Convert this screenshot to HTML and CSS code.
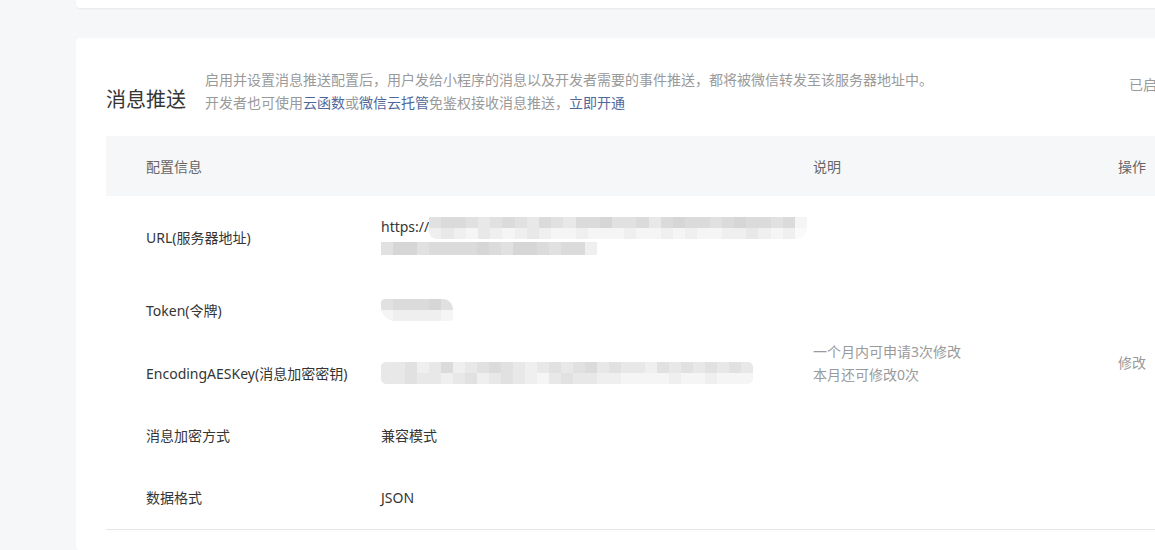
FILE: index.html
```html
<!DOCTYPE html>
<html lang="zh-CN">
<head>
<meta charset="utf-8">
<title>消息推送</title>
<link rel="stylesheet" href="styles.css">
</head>
<body>
<div class="page">
  <div class="card card-prev"></div>
  <section class="card card-push">
    <div class="push-head">
      <h2 class="push-title">消息推送</h2>
      <div class="push-desc">
        <p>启用并设置消息推送配置后，用户发给小程序的消息以及开发者需要的事件推送，都将被微信转发至该服务器地址中。</p>
        <p>开发者也可使用<a href="#">云函数</a>或<a href="#">微信云托管</a>免鉴权接收消息推送，<a href="#">立即开通</a></p>
      </div>
      <div class="push-status">已启用</div>
    </div>
    <table class="cfg">
      <colgroup>
        <col class="c1"><col class="c2"><col class="c3"><col class="c4">
      </colgroup>
      <thead>
        <tr><th>配置信息</th><th></th><th>说明</th><th>操作</th></tr>
      </thead>
      <tbody>
        <tr class="r-url">
          <td class="lbl">URL(服务器地址)</td>
          <td class="val">
            <div class="url-line"><span>https://</span>
              <div class="mz mz-url1">
                <i class="g3"></i><i class="g2"></i><i class="g2"></i><i class="g3"></i><i class="g4"></i><i class="g3"></i><i class="g2"></i><i class="g3"></i><i class="g4"></i><i class="g2"></i><i class="g3"></i><i class="g4"></i><i class="g2"></i><i class="g2"></i><i class="g1"></i><i class="g3"></i><i class="g3"></i><i class="g2"></i><i class="g4"></i><i class="g2"></i><i class="g1"></i><i class="g2"></i><i class="g2"></i><i class="g3"></i><i class="g2"></i><i class="g1"></i><i class="g2"></i><i class="g2"></i><i class="g3"></i><i class="g2"></i><i class="g6"></i>
                <i class="g5"></i><i class="g4"></i><i class="g5"></i><i class="g6"></i><i class="g4"></i><i class="g5"></i><i class="g6"></i><i class="g5"></i><i class="g4"></i><i class="g5"></i><i class="g6"></i><i class="g6"></i><i class="g5"></i><i class="g6"></i><i class="g6"></i><i class="g6"></i><i class="g5"></i><i class="g6"></i><i class="g6"></i><i class="g5"></i><i class="g6"></i><i class="g5"></i><i class="g6"></i><i class="g6"></i><i class="g5"></i><i class="g5"></i><i class="g4"></i><i class="g5"></i><i class="g6"></i><i class="g5"></i><i class="g7"></i>
              </div>
            </div>
            <div class="url-line">
              <div class="mz mz-url2">
                <i class="g3"></i><i class="g1"></i><i class="g1"></i><i class="g3"></i><i class="g2"></i><i class="g2"></i><i class="g2"></i><i class="g2"></i><i class="g1"></i><i class="g2"></i><i class="g3"></i><i class="g1"></i><i class="g1"></i><i class="g2"></i><i class="g3"></i><i class="g2"></i><i class="g2"></i><i class="g5"></i>
              </div>
            </div>
          </td>
          <td class="note" rowspan="5">一个月内可申请3次修改<br>本月还可修改0次</td>
          <td class="op" rowspan="5">修改</td>
        </tr>
        <tr class="r-token">
          <td class="lbl">Token(令牌)</td>
          <td class="val">
            <div class="mz mz-token">
              <i class="g3"></i><i class="g2"></i><i class="g2"></i><i class="g2"></i><i class="g1"></i><i class="g3"></i>
              <i class="g6"></i><i class="g5"></i><i class="g5"></i><i class="g5"></i><i class="g5"></i><i class="g6"></i>
            </div>
          </td>
        </tr>
        <tr class="r-mid">
          <td class="lbl">EncodingAESKey(消息加密密钥)</td>
          <td class="val">
            <div class="mz mz-aes">
              <i class="g4"></i><i class="g4"></i><i class="g3"></i><i class="g5"></i><i class="g4"></i><i class="g2"></i><i class="g5"></i><i class="g4"></i><i class="g3"></i><i class="g2"></i><i class="g3"></i><i class="g4"></i><i class="g5"></i><i class="g4"></i><i class="g3"></i><i class="g4"></i><i class="g3"></i><i class="g2"></i><i class="g4"></i><i class="g3"></i><i class="g4"></i><i class="g4"></i><i class="g5"></i><i class="g3"></i><i class="g4"></i><i class="g3"></i><i class="g4"></i><i class="g3"></i><i class="g4"></i><i class="g3"></i><i class="g4"></i>
              <i class="g4"></i><i class="g4"></i><i class="g3"></i><i class="g4"></i><i class="g4"></i><i class="g5"></i><i class="g4"></i><i class="g3"></i><i class="g5"></i><i class="g4"></i><i class="g3"></i><i class="g4"></i><i class="g5"></i><i class="g6"></i><i class="g4"></i><i class="g3"></i><i class="g4"></i><i class="g4"></i><i class="g5"></i><i class="g5"></i><i class="g6"></i><i class="g6"></i><i class="g6"></i><i class="g6"></i><i class="g5"></i><i class="g6"></i><i class="g6"></i><i class="g5"></i><i class="g6"></i><i class="g6"></i><i class="g6"></i>
            </div>
          </td>
        </tr>
        <tr class="r-mid">
          <td class="lbl">消息加密方式</td>
          <td class="val">兼容模式</td>
        </tr>
        <tr class="r-last">
          <td class="lbl">数据格式</td>
          <td class="val">JSON</td>
        </tr>
      </tbody>
    </table>
  </section>
</div>
</body>
</html>
```

FILE: styles.css
```css
html, body {
  margin: 0;
  padding: 0;
  overflow: hidden;
}
body {
  background: #f6f7f9;
  font-family: "Noto Sans", "Noto Sans CJK SC", sans-serif;
  color: #353535;
  font-size: 14px;
}
.page {
  padding-left: 76px;
  display: flex;
  flex-direction: column;
  gap: 30px;
}
.card {
  background: #fff;
  border-radius: 4px;
  width: 1125px;
}
.card-prev {
  height: 8px;
  border-radius: 0 0 4px 4px;
  box-shadow: 0 1px 2px rgba(0, 0, 0, 0.06);
}
.card-push {
  padding: 30px 30px 20px;
  box-sizing: border-box;
}
.push-head {
  display: flex;
  align-items: flex-end;
}
.push-title {
  margin: 0;
  font-size: 20px;
  font-weight: normal;
  line-height: 28px;
  color: #353535;
  width: 99px;
  flex-shrink: 0;
}
.push-desc {
  font-size: 14px;
  line-height: 23px;
  color: #9a9a9a;
}
.push-desc p {
  margin: 0;
}
.push-desc a {
  color: #4f679a;
  text-decoration: none;
}
.push-status {
  margin-left: auto;
  align-self: flex-start;
  font-size: 14px;
  color: #9a9a9a;
  line-height: 20px;
  margin-top: 7px;
  white-space: nowrap;
}
.cfg {
  margin-top: 22px;
  width: 100%;
  border-collapse: collapse;
  table-layout: fixed;
}
.c1 { width: 275px; }
.c2 { width: 432px; }
.c3 { width: 305px; }
.c4 { width: auto; }
.cfg thead th {
  background: #f6f7f9;
  height: 60px;
  padding: 0;
  text-align: left;
  font-weight: normal;
  font-size: 14px;
  color: #666;
}
.cfg thead th:first-child {
  padding-left: 40px;
}
.cfg td {
  padding: 0;
  height: 62px;
  vertical-align: middle;
  line-height: 21px;
}
.cfg tr.r-url td { height: 82px; }
.cfg tr.r-token td { height: 64px; }
.cfg tr.r-last td {
  height: 63px;
  border-bottom: 1px solid #e7e7eb;
}
.cfg td.lbl {
  padding-left: 40px;
}
.cfg td.note {
  font-size: 14px;
  color: #9a9a9a;
  line-height: 23px;
  border-bottom: 1px solid #e7e7eb;
}
.cfg td.op {
  color: #9a9a9a;
  border-bottom: 1px solid #e7e7eb;
}
.url-line {
  display: flex;
  align-items: center;
  height: 21px;
}
.mz {
  display: grid;
  grid-auto-rows: 11px;
  flex-shrink: 0;
}
.mz i {
  display: block;
}
.mz-url1 {
  grid-template-columns: repeat(31, 12.2px);
  margin-top: 2px;
  border-radius: 0 0 10px 8px;
  overflow: hidden;
}
.mz-url2 {
  grid-template-columns: repeat(18, 12px);
  grid-auto-rows: 13px;
  margin-top: 1px;
}
.mz-token {
  grid-template-columns: repeat(6, 12px);
  width: 72px;
  border-radius: 4px 10px 4px 14px;
  overflow: hidden;
}
.mz-aes {
  grid-template-columns: repeat(31, 12px);
  width: 372px;
  border-radius: 5px;
  overflow: hidden;
}
.g1 { background: #d6d6d6; }
.g2 { background: #dbdbdb; }
.g3 { background: #e1e1e1; }
.g4 { background: #e8e8e8; }
.g5 { background: #efefef; }
.g6 { background: #f5f5f5; }
.g7 { background: #fafafa; }
```
